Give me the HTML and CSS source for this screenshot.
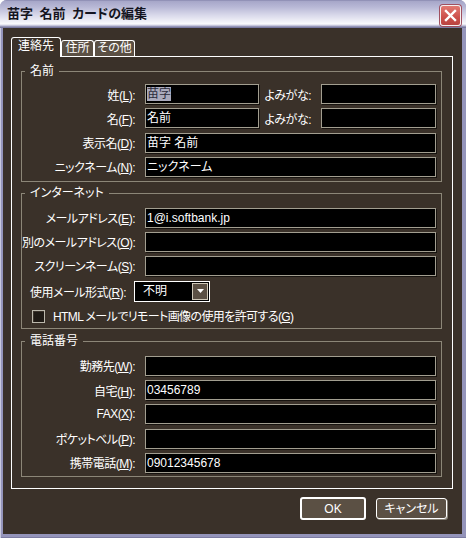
FILE: index.html
```html
<!DOCTYPE html>
<html lang="ja">
<head>
<meta charset="utf-8">
<title>苗字 名前 カードの編集</title>
<link rel="stylesheet" href="styles.css">
</head>
<body>
<div class="window">
  <div class="titlebar">
    <span class="title">苗字 名前 カードの編集</span>
    <div class="close">
      <svg width="19" height="19" viewBox="0 0 19 19"><path d="M5 5 L14 14 M14 5 L5 14" stroke="#fff" stroke-width="2.4" stroke-linecap="square" fill="none"/></svg>
    </div>
  </div>
  <div class="client">
    <div class="tabs">
      <div class="tab active t1">連絡先</div>
      <div class="tab t2">住所</div>
      <div class="tab t3">その他</div>
    </div>
    <div class="panel">
      <fieldset class="group g-name">
        <legend>名前</legend>
        <div class="rows rows-name">
          <div class="row">
            <label class="lbl">姓(<u>L</u>):</label>
            <div class="field short"><span class="sel">苗字</span></div>
            <label class="lbl2">よみがな:</label>
            <div class="field"></div>
          </div>
          <div class="row">
            <label class="lbl">名(<u>F</u>):</label>
            <div class="field short">名前</div>
            <label class="lbl2">よみがな:</label>
            <div class="field"></div>
          </div>
          <div class="row">
            <label class="lbl">表示名(<u>D</u>):</label>
            <div class="field">苗字 名前</div>
          </div>
          <div class="row">
            <label class="lbl">ニックネーム(<u>N</u>):</label>
            <div class="field">ニックネーム</div>
          </div>
        </div>
      </fieldset>
      <fieldset class="group g-net">
        <legend>インターネット</legend>
        <div class="rows rows-net">
          <div class="row">
            <label class="lbl">メールアドレス(<u>E</u>):</label>
            <div class="field">1@i.softbank.jp</div>
          </div>
          <div class="row">
            <label class="lbl">別のメールアドレス(<u>O</u>):</label>
            <div class="field"></div>
          </div>
          <div class="row">
            <label class="lbl">スクリーンネーム(<u>S</u>):</label>
            <div class="field"></div>
          </div>
        </div>
        <div class="row select-row">
          <label class="lbl-left">使用メール形式(<u>R</u>):</label>
          <div class="select">
            <span class="select-text">不明</span>
            <span class="select-btn"><svg width="7" height="4" viewBox="0 0 7 4"><path d="M0 0 H7 L3.5 4 Z" fill="#fff"/></svg></span>
          </div>
        </div>
        <div class="check-row">
          <span class="checkbox"></span>
          <span class="check-label">HTML メールでリモート画像の使用を許可する(<u>G</u>)</span>
        </div>
      </fieldset>
      <fieldset class="group g-tel">
        <legend>電話番号</legend>
        <div class="rows rows-tel">
          <div class="row">
            <label class="lbl">勤務先(<u>W</u>):</label>
            <div class="field"></div>
          </div>
          <div class="row">
            <label class="lbl">自宅(<u>H</u>):</label>
            <div class="field">03456789</div>
          </div>
          <div class="row">
            <label class="lbl">FAX(<u>X</u>):</label>
            <div class="field"></div>
          </div>
          <div class="row">
            <label class="lbl">ポケットベル(<u>P</u>):</label>
            <div class="field"></div>
          </div>
          <div class="row">
            <label class="lbl">携帯電話(<u>M</u>):</label>
            <div class="field">09012345678</div>
          </div>
        </div>
      </fieldset>
    </div>
    <div class="buttons">
      <button class="btn btn-default">OK</button>
      <button class="btn btn-cancel">キャンセル</button>
    </div>
  </div>
</div>
</body>
</html>
```

FILE: styles.css
```css
html, body {
  margin: 0;
  padding: 0;
  background: #ffffff;
}

.window {
  width: 466px;
  height: 538px;
  box-sizing: border-box;
  display: flex;
  flex-direction: column;
  background: #9494ba;
  border-radius: 7px 7px 0 0;
  overflow: hidden;
  font-family: "Liberation Sans", "Noto Sans CJK JP", sans-serif;
  font-size: 12px;
  color: #ffffff;
  font-feature-settings: "palt";
  box-shadow: inset 1px 0 0 #c8c8de, inset 0 -1px 0 #7c7ca2;
}

.titlebar {
  height: 28px;
  flex: 0 0 28px;
  display: flex;
  justify-content: space-between;
  align-items: flex-start;
  padding: 0 5px 0 7px;
  box-sizing: border-box;
  background: linear-gradient(to bottom, #7e7ea6 0, #a6a6c8 1px, #b8b8d6 7px, #d8d8ea 15px, #f2f2f8 22px, #fafafc 24px, #b4b4d0 26px, #7a7aa0 27px, #7a7aa0 28px);
}

.title {
  margin-top: 5px;
  font-size: 13px;
  font-weight: bold;
  line-height: 18px;
  color: #141420;
  word-spacing: 3px;
}

.close {
  margin-top: 5px;
  width: 21px;
  height: 21px;
  box-sizing: border-box;
  border: 1px solid #f4f0f0;
  border-radius: 3px;
  background: linear-gradient(to bottom, #e27a72, #cc4f4a 60%, #b84440);
  display: flex;
  align-items: center;
  justify-content: center;
  box-shadow: 0 0 0 1px #a05060;
}

.client {
  flex: 1;
  margin: 0 4px 4px 3px;
  background: #3a3129;
  display: flex;
  flex-direction: column;
}

.tabs {
  display: flex;
  align-items: flex-end;
  height: 20px;
  margin: 9px 0 0 8px;
  position: relative;
  z-index: 1;
}

.tab {
  box-sizing: border-box;
  border: 1px solid #ffffff;
  border-bottom: none;
  border-radius: 3px 3px 0 0;
  text-align: center;
  line-height: 15px;
  height: 16px;
  margin-bottom: 1px;
  background: #5b5044;
  color: #ffffff;
}

.tab.active {
  height: 20px;
  line-height: 16px;
  margin-bottom: 0;
  background: #3a3129;
}

.t1 { width: 50px; }
.t2 { width: 33px; }
.t3 { width: 41px; }

.panel {
  margin: -1px 9px 0 8px;
  height: 433px;
  box-sizing: border-box;
  border: 1px solid #ffffff;
  padding: 0 10px 0 9px;
}

.group {
  margin: 0;
  padding: 0 5px 0 0;
  border: 1px solid #8c8678;
  min-width: 0;
}

.group legend {
  margin-left: 3px;
  padding: 0 5px;
  line-height: 15px;
  font-size: 12px;
  color: #ffffff;
}

.g-name {
  margin-top: 7px;
  padding-top: 5px;
  padding-bottom: 4px;
}

.g-net {
  margin-top: 4px;
  padding-top: 7px;
  padding-bottom: 4px;
}

.g-tel {
  margin-top: 5px;
  padding-top: 7px;
  padding-bottom: 3px;
}

.rows {
  display: flex;
  flex-direction: column;
  gap: 4.34px;
}

.rows-net {
  gap: 4px;
}

.rows-tel {
  gap: 4.25px;
}

.row {
  display: flex;
  align-items: center;
  height: 20px;
}

.lbl {
  width: 113px;
  margin-right: 10px;
  text-align: right;
  white-space: nowrap;
  flex: 0 0 113px;
  letter-spacing: -0.5px;
}

.lbl2 {
  width: 52px;
  flex: 0 0 52px;
  margin-right: 10px;
  text-align: right;
  white-space: nowrap;
  letter-spacing: -0.5px;
}

.field {
  flex: 1;
  height: 20px;
  box-sizing: border-box;
  background: #000000;
  border: 1px solid #a29e90;
  box-shadow: 1px 1px 0 #17130f;
  padding: 0 1px;
  line-height: 18px;
  color: #ffffff;
  white-space: nowrap;
  overflow: hidden;
}

.field.short {
  flex: 0 0 114px;
  width: 114px;
}

.sel {
  background: #aaaabc;
  color: #2a2a3a;
}

.select-row {
  margin-top: 5px;
  height: 21px;
}

.lbl-left {
  width: 112px;
  flex: 0 0 112px;
  box-sizing: border-box;
  padding-left: 8px;
  white-space: nowrap;
  letter-spacing: -0.5px;
}

.select {
  width: 76px;
  height: 21px;
  box-sizing: border-box;
  border: 1px solid #ffffff;
  background: #000000;
  display: flex;
  align-items: center;
}

.select-text {
  padding-left: 8px;
  line-height: 16px;
}

.select-btn {
  margin-left: auto;
  margin-right: 1px;
  width: 16px;
  height: 17px;
  box-sizing: border-box;
  border: 1px solid #cfc8b8;
  background: #5b5044;
  display: flex;
  align-items: center;
  justify-content: center;
}

.check-row {
  display: flex;
  align-items: center;
  height: 14px;
  margin-top: 8px;
  padding-left: 10px;
}

.checkbox {
  width: 13px;
  height: 13px;
  box-sizing: border-box;
  border: 1px solid #bcb8ac;
  background: #1f1a15;
  box-shadow: inset 1px 1px 0 #3c342c;
  flex: 0 0 13px;
}

.check-label {
  margin-left: 8px;
  white-space: nowrap;
  line-height: 14px;
  letter-spacing: -0.6px;
}

.buttons {
  display: flex;
  justify-content: flex-end;
  align-items: center;
  gap: 10px;
  margin: 8px 15px 0 0;
}

.btn {
  font-family: "Liberation Sans", "Noto Sans CJK JP", sans-serif;
  font-feature-settings: "palt";
  font-size: 12px;
  color: #ffffff;
  background: #5b5044;
  border-radius: 3px;
  padding: 0;
  margin: 0;
  box-sizing: border-box;
  line-height: 14px;
}

.btn-default {
  width: 66px;
  height: 23px;
  border: 2px solid #ffffff;
}

.btn-cancel {
  width: 71px;
  height: 21px;
  border: 1px solid #ffffff;
  box-shadow: 1px 1px 0 #8a8478;
}

u {
  text-decoration: underline;
  text-underline-offset: 1px;
}
```
